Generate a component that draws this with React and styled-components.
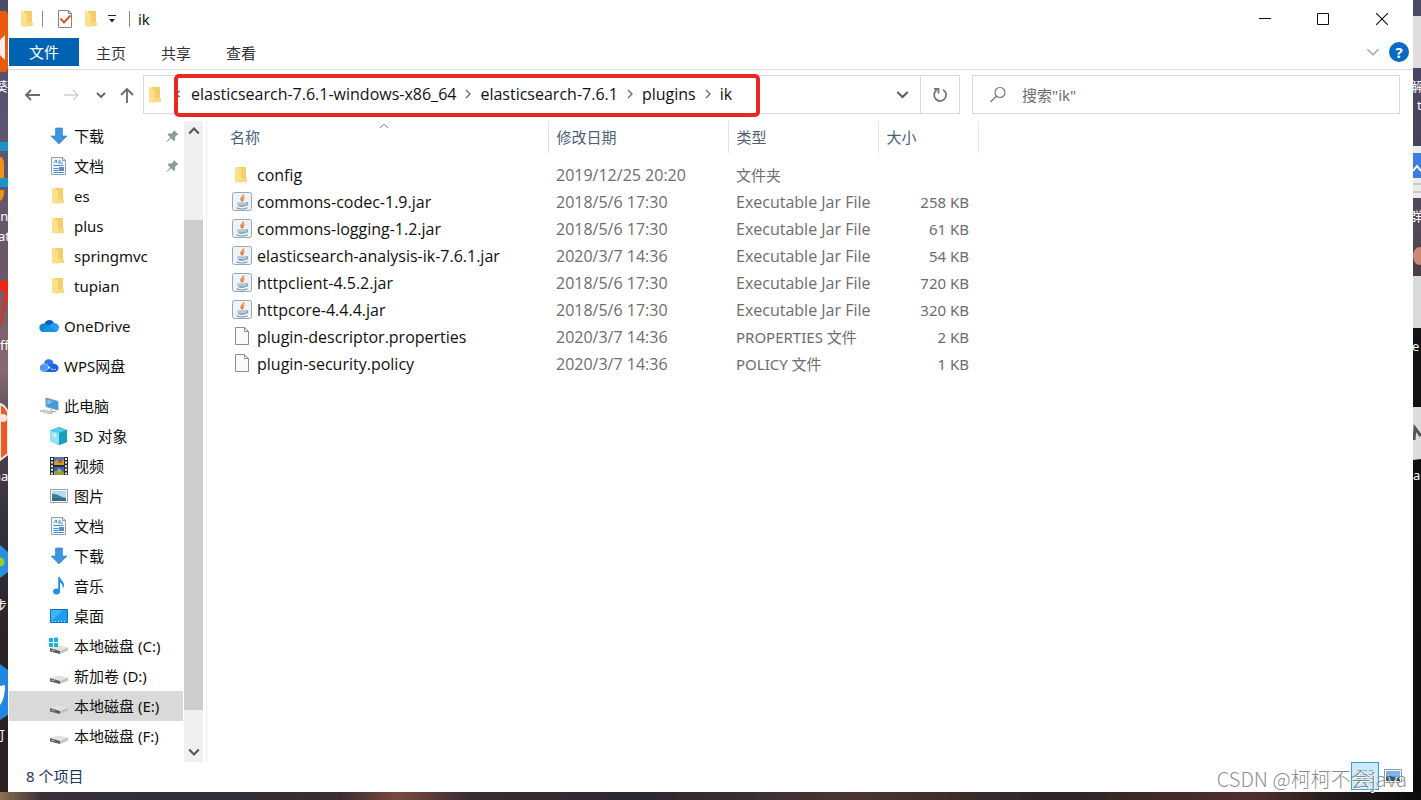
import React from "react";
import styled, { createGlobalStyle } from "styled-components";

const GlobalStyle = createGlobalStyle`
  *, *::before, *::after { box-sizing: border-box; }
  body {
    margin: 0;
    background: #2a2024;
    color: #111;
    font-family: "Noto Sans", "Noto Sans CJK SC", sans-serif;
    font-size: 15px;
    line-height: 20px;
  }
  button, input {
    font: inherit;
    color: inherit;
    border: 0;
    padding: 0;
    margin: 0;
    background: none;
  }
  svg { display: block; flex: none; }
`;

/* ---------- desktop around the window ---------- */

const Desktop = styled.div`
  display: grid;
  grid-template-columns: 8px minmax(0, 1fr) 8px;
  grid-template-rows: minmax(0, 1fr) 8px;
  height: 100vh;
  overflow: hidden;
`;

const Edge = styled.div`
  overflow: hidden;
  background: ${(p) => p.$bg};
`;

const BottomEdge = styled.div`
  grid-column: 1 / -1;
  background: linear-gradient(
    90deg,
    #8e6f52 0, #3a3038 3%, #2f3038 12%, #3b2d33 24%, #7a4a40 28%, #3a2c34 33%,
    #2c2830 45%, #4a3534 60%, #2d2425 75%, #51302f 88%, #241c1e 94%, #0c0b0c 100%
  );
`;

/* ---------- window ---------- */

const Window = styled.main`
  position: relative;
  display: flex;
  flex-direction: column;
  min-height: 0;
  background: #fff;
`;

const TitleBar = styled.header`
  display: flex;
  align-items: center;
  height: 38px;
  padding: 0 1px 0 12px;
`;

const QuickAccess = styled.div`
  display: flex;
  align-items: center;
  gap: 8px;
  flex: 1;
`;

const Rule = styled.span`
  width: 1px;
  height: 16px;
  background: #8a8a8a;
`;

const IconButton = styled.button`
  display: flex;
  align-items: center;
  justify-content: center;
  width: ${(p) => p.$w || 16}px;
  height: ${(p) => p.$h || 20}px;
  color: ${(p) => p.$color || "#5f5f5f"};
`;

const Title = styled.h1`
  margin: 0;
  font-size: 15px;
  font-weight: 400;
  line-height: 20px;
`;

const Ribbon = styled.nav`
  display: flex;
  align-items: center;
  height: 32px;
  padding: 0 4px 3px 1px;
  border-bottom: 1px solid #d9dcdf;
`;

const Tabs = styled.div`
  display: flex;
  flex: 1;
  gap: 35px;
  align-items: center;
`;

const FileTab = styled.button`
  width: 70px;
  height: 28px;
  margin-right: -18px;
  background: #0063b1;
  color: #fff;
`;

const Tab = styled.button`
  height: 28px;
  padding-top: 2px;
  color: #333;
`;

const Help = styled.button`
  width: 20px;
  height: 20px;
  margin-left: 8px;
  border-radius: 50%;
  background: #0a69c4;
  color: #fff;
  font-weight: 700;
  line-height: 20px;
`;

const NavBar = styled.div`
  display: grid;
  grid-template-columns: 120px minmax(0, 13fr) minmax(0, 7fr);
  align-items: center;
  height: 49px;
  padding: 0 13px 0 15px;
`;

const NavButtons = styled.div`
  display: flex;
  align-items: center;
  gap: 18px;
`;

const AddressBox = styled.div`
  display: flex;
  min-width: 0;
  height: 39px;
  border: 1px solid #d9d9d9;
`;

const FolderSlot = styled.div`
  display: flex;
  align-items: center;
  width: 30px;
  padding-left: 4px;
`;

const Crumbs = styled.ol`
  position: relative;
  display: flex;
  align-items: center;
  margin: 0;
  padding: 0 28px 2px 0;
  list-style: none;
  white-space: nowrap;
  font-family: "Open Sans", "Noto Sans CJK SC", sans-serif;
  font-size: 16px;

  &::after {
    content: "";
    position: absolute;
    inset: -2px 0 -4px 0;
    border: 4px solid #e8291f;
    border-radius: 5px;
    pointer-events: none;
  }
`;

const Crumb = styled.li`
  display: flex;
  align-items: center;

  a { color: #111; text-decoration: none; }
`;

const CrumbArrow = styled.span`
  display: flex;
  justify-content: center;
  width: ${(p) => (p.$lead ? 17 : 24)}px;
  padding-right: ${(p) => (p.$lead ? 9 : 0)}px;
`;

const Spacer = styled.div`
  flex: 1;
`;

const AddressEnd = styled.div`
  display: flex;
  align-items: center;
  border-left: ${(p) => (p.$line ? "1px solid #d9d9d9" : "0")};
  padding: 0 ${(p) => (p.$line ? 9 : 8)}px;
`;

const SearchBox = styled.label`
  display: flex;
  align-items: center;
  min-width: 0;
  height: 39px;
  margin-left: 12px;
  padding-left: 16px;
  gap: 15px;
  border: 1px solid #d9d9d9;

  input {
    flex: 1;
    min-width: 0;
    outline: 0;
  }
  input::placeholder { color: #6d6d6d; opacity: 1; }
`;

/* ---------- body ---------- */

const Body = styled.div`
  display: flex;
  flex: 1;
  min-height: 0;
  padding-top: 2px;
`;

const Sidebar = styled.aside`
  display: flex;
  width: 199px;
  border-right: 1px solid #ececec;
`;

const Tree = styled.ul`
  flex: 1;
  margin: 0;
  padding: 0 0 0 1px;
  list-style: none;
  overflow: hidden;
`;

const TreeItem = styled.li`
  height: 30px;
  margin-top: ${(p) => (p.$gap ? 10 : 0)}px;
  background: ${(p) => (p.$selected ? "#d9d9d9" : "transparent")};

  a {
    display: flex;
    align-items: center;
    gap: 5px;
    height: 100%;
    padding: 0 4px 0 ${(p) => (p.$top ? 30 : 40)}px;
    color: #111;
    text-decoration: none;
    white-space: nowrap;
  }
  span { flex: 1; }
`;

const ScrollBar = styled.div`
  display: flex;
  flex-direction: column;
  width: 19px;
  margin: 0 3px 0 1px;
  background: #f0f0f0;
`;

const Track = styled.div`
  display: flex;
  flex-direction: column;
  flex: 1;
  padding: 79px 0 32px;
`;

const Thumb = styled.div`
  flex: 1;
  background: #cdcdcd;
`;

const Files = styled.section`
  flex: 1;
  min-width: 0;
  padding-left: 13px;
  overflow: hidden;
`;

const FileTable = styled.table`
  width: 758px;
  table-layout: fixed;
  border-collapse: collapse;

  th {
    position: relative;
    height: 32px;
    padding: 0 8px;
    border-right: 1px solid #e5e5e5;
    color: #4c607a;
    font-weight: 400;
    text-align: left;
  }
  thead::after {
    content: "";
    display: block;
    height: 8px;
  }
  td {
    height: 27px;
    padding: 0 8px;
    color: #6d6d6d;
    font-family: "Open Sans", "Noto Sans CJK SC", sans-serif;
    font-size: 16px;
    white-space: nowrap;
  }
  td:lang(zh), td:last-child {
    font-family: "Noto Sans", "Noto Sans CJK SC", sans-serif;
    font-size: 15px;
  }
  th:first-child { padding-left: 10px; }
  td:first-child { padding-left: 12px; color: #111; }
  td:last-child { padding-right: 9px; text-align: right; }
`;

const SortMark = styled.span`
  position: absolute;
  inset: 0 0 auto;
  display: flex;
  justify-content: center;
`;

const FileName = styled.div`
  display: flex;
  align-items: center;
  gap: 5px;
`;

const StatusBar = styled.footer`
  display: flex;
  align-items: center;
  height: 30px;
  padding: 0 6px 2px 18px;
  color: #1e395b;
`;

const ViewButton = styled.button`
  display: flex;
  align-items: center;
  justify-content: center;
  width: 28px;
  height: 28px;
  border: 1px solid ${(p) => (p.$active ? "#3aa0d0" : "transparent")};
  background: ${(p) => (p.$active ? "#cde8f8" : "transparent")};
`;

const Watermark = styled.div`
  position: absolute;
  right: 6px;
  bottom: 0;
  color: rgba(120, 120, 120, 0.85);
  font-family: "Noto Sans CJK SC", sans-serif;
  font-size: 20px;
  font-weight: 300;
  line-height: 26px;
  white-space: nowrap;
  text-shadow: 1px 1px 0 #fff;
`;

/* ---------- icons ---------- */

const Svg = ({ w = 20, h = 20, vb, children }) => (
  <svg width={w} height={h} viewBox={vb || `0 0 ${w} ${h}`} fill="none" aria-hidden="true">
    {children}
  </svg>
);

const FolderShape = () => (
  <>
    <path d="M1 1h6v15H1z" fill="#ffe9a6" />
    <path d="M4 1h8v14l-1 1H4z" fill="#f3cf6b" />
    <path d="M1 1l6 3v13l-6-1z" fill="#fde08a" />
    <path d="M7 12h6v4H7z" fill="#f8d97d" />
  </>
);

const FolderSmall = () => <Svg w={14} h={18}><FolderShape /></Svg>;
const Folder = () => <Svg w={20} h={18} vb="-2 0 20 18"><FolderShape /></Svg>;

const CheckDoc = () => (
  <Svg w={16} h={20}>
    <path d="M1.500 1.500h10l3 3v14h-13z" fill="#fbfbfb" stroke="#858585" />
    <path d="M11.500 1.500v3h3" stroke="#858585" />
    <path d="M3.500 9.500l3.500 4 6.500-7" stroke="#e2562a" strokeWidth="2" />
  </Svg>
);

const Chevron = ({ dir = "down", size = 10, color = "currentColor", width = 1.5 }) => {
  const d = {
    down: "M1 3l4 4 4-4",
    up: "M1 7l4-4 4 4",
    right: "M3 1l4 4-4 4",
    left: "M7 1L3 5l4 4",
  }[dir];
  return <Svg w={size} h={size} vb="0 0 10 10"><path d={d} stroke={color} strokeWidth={width} /></Svg>;
};

const Arrow = ({ dir, color }) => {
  const d = {
    left: "M16 9H2M7 4L2 9l5 5",
    right: "M2 9h14M11 4l5 5-5 5",
    up: "M9 17V3M3 9l6-6 6 6",
  }[dir];
  return <Svg w={18} h={18}><path d={d} stroke={color} strokeWidth={dir === "right" ? 1.4 : 1.8} /></Svg>;
};

const Download = () => (
  <Svg><path d="M6.500 2h7v8h4.500l-8 8-8-8h4.500z" fill="#3b93e2" stroke="#2c7fcd" strokeWidth=".6" /></Svg>
);

const Doc = () => (
  <Svg>
    <path d="M2.500 1.500h11l3 3v14h-14z" fill="#f2f5f7" stroke="#9aa0a5" />
    <path d="M13.500 1.500v3h3" stroke="#8b959d" />
    <path d="M5 7l2-3 1 3M9 5h3M9 7h5M4.500 9.500h10M4.500 12.500h5M4.500 14.500h5M4.500 16.500h10" stroke="#3c8fd0" />
    <path d="M10 11h5v4h-5z" fill="#5b8fba" />
  </Svg>
);

const Pin = () => (
  <Svg w={13} h={14}>
    <path d="M8 1l4.500 4.500-1.500.5-2 2 .2 3L7.800 12 5 9.200 1 13l-.5-.500L4.200 8.300 1.500 5.600l1-1.200 3 .2 2-2z" fill="#8d9aa0" />
  </Svg>
);

const OneDrive = () => (
  <Svg>
    <path d="M5.500 8a5 5 0 0 1 9.500-1l-3 6z" fill="#0a62b8" />
    <path d="M4.500 16a4.200 4.200 0 0 1 0-8.400c2-.4 4 .4 5 1.400l6 7z" fill="#1182d8" />
    <path d="M8 11l6-4c3.600-.4 6 2 6 4.500S18 16 16 16H4z" fill="#2a9ff0" />
    <path d="M2 15l8-5 8 5c-1 1-2 1-3 1H5c-1 0-2 0-3-1z" fill="#1492e6" />
  </Svg>
);

const Wps = () => (
  <Svg>
    <path d="M5 8a5 5 0 0 1 9.500-2l-4 5z" fill="#2b78ea" />
    <circle cx="5" cy="12" r="4.200" fill="#4a98f7" />
    <path d="M9 9.500c3-3.500 10-2.500 10.500 2.300.2 2.600-2 4.200-4 4.200H5l6-4z" fill="#1e63dd" />
    <path d="M5.500 8c3 0 4 2 6.500 4.500 1.500 1.500 3 1.500 5 .5" stroke="#cfe2ff" strokeWidth=".8" />
    <path d="M3 15.500c4 0 5.500-2 8-4.500" stroke="#b8d8ff" strokeWidth=".8" />
  </Svg>
);

const Computer = () => (
  <Svg>
    <path d="M7 2l12 3.500V14L7 10.500z" fill="#3d9ce0" stroke="#8298a8" />
    <path d="M8 3.500l6 2L8.500 9z" fill="#7cc4f2" />
    <path d="M12 12.500v2.500l5 1" stroke="#9da7af" />
    <path d="M1 15l4-1 9 2.500-3 1.500z" fill="#cfd4d8" stroke="#9da4aa" strokeWidth=".6" />
  </Svg>
);

const Cube = () => (
  <Svg>
    <path d="M1 4.500L10 1l8 3v12l-8 3-9-4z" fill="#21a7c5" />
    <path d="M1 4.500L10 1l8 3-8 3z" fill="#4ccde4" />
    <path d="M1 4.500L10 7v12l-9-4z" fill="#93e2ef" />
    <path d="M10 7l8-3v12l-8 3z" fill="#16a0be" />
    <path d="M3 7l4 1v4z" fill="#d5f6fa" />
  </Svg>
);

const Film = () => (
  <Svg>
    <path d="M1 1h18v18H1z" fill="#2b2b2b" />
    <path d="M5 1h10v8H5z" fill="#4774c9" />
    <path d="M5 6l4-3 4 2 2-2v6H5z" fill="#b7a635" />
    <circle cx="11" cy="5" r="2" fill="#d2423c" />
    <path d="M5 11h10v8H5z" fill="#3a62c0" />
    <path d="M5 16l5-3 5 3v3H5z" fill="#8ca03c" />
    <path d="M9 12l3 2-2 3z" fill="#e4b04b" />
    <path d="M3 2v17M17 2v17" stroke="#eee" strokeWidth="2" strokeDasharray="2 1.600" />
  </Svg>
);

const Photo = () => (
  <Svg>
    <path d="M1.500 3.500h17v13h-17z" fill="#fff" stroke="#9aa2a8" />
    <path d="M3 5h14v10H3z" fill="#b5dbf2" />
    <path d="M3 8c4-1 8 3 14 4v3H3z" fill="#3f7f95" />
    <path d="M3 12.500c5-1 9 0 14 .5v2H3z" fill="#356b88" />
  </Svg>
);

const Music = () => (
  <Svg>
    <ellipse cx="7.500" cy="15.500" rx="3.500" ry="3" fill="#1c93ea" />
    <path d="M9.200 15.500V1h1.800c.5 3.500 4.500 4.500 4 8.500-.2 1.400-.8 2.200-1.500 3 .8-3-.5-5-2.500-6v9z" fill="#1c93ea" />
  </Svg>
);

const DesktopIcon = () => (
  <Svg>
    <path d="M1.500 3.500h17v13h-17z" fill="#1e9bf5" stroke="#0c70c4" />
    <path d="M2 4h12L4 14H2z" fill="#42b1fb" />
    <path d="M3 15.500h14" stroke="#d6efff" strokeDasharray="1 2" />
  </Svg>
);

const Disk = ({ system }) => (
  <Svg>
    <path d="M1 12l8-2.500 10 2-8 3.500z" fill="#e2e2e2" />
    <path d="M1 12l10 3v3L1 15.500z" fill="#5c5c5c" />
    <path d="M11 15l8-3.500v3L11 18z" fill="#c2c2c2" />
    <path d="M2.500 14l3 1" stroke="#a5df9a" />
    {system && <path d="M0 2h4v4H0zM5 1.500h4V6H5zM0 7h4v4H0zM5 7h4v4H5z" fill="#16b5dd" />}
  </Svg>
);

const Jar = () => (
  <Svg>
    <rect x=".5" y=".5" width="19" height="18" rx="2" fill="#f0f3f6" stroke="#9aa8b4" />
    <path d="M11.500 2.500c1 2-3.500 3-2.500 5 .4.800 1.200 1 1 2M12.500 5.500c-1.800 1-2.500 1.500-1.300 3.500" stroke="#e8772e" strokeWidth="1.400" />
    <path d="M5.500 10.500h8.500v2.500l-2 2H7.500l-2-2z" fill="#8fadc8" />
    <path d="M6 12h7.500" stroke="#e6edf3" strokeWidth=".8" />
    <path d="M14 10.500c2.600 0 2 2.500-.5 3" stroke="#6f93b4" strokeWidth="1.200" />
    <path d="M4.500 15.800c3 1.500 8 1.500 11 0" stroke="#6f93b4" strokeWidth="1.200" />
  </Svg>
);

const BlankFile = () => (
  <Svg>
    <path d="M3.500.500h9l4 4v13h-13z" fill="#fafafa" stroke="#8c8c8c" />
    <path d="M12.500.500v4h4" stroke="#8c8c8c" />
  </Svg>
);

/* ---------- data ---------- */

const tree = [
  { name: "下载", icon: Download, pinned: true },
  { name: "文档", icon: Doc, pinned: true },
  { name: "es", icon: Folder },
  { name: "plus", icon: Folder },
  { name: "springmvc", icon: Folder },
  { name: "tupian", icon: Folder },
  { name: "OneDrive", icon: OneDrive, top: true },
  { name: "WPS网盘", icon: Wps, top: true },
  { name: "此电脑", icon: Computer, top: true },
  { name: "3D 对象", icon: Cube },
  { name: "视频", icon: Film },
  { name: "图片", icon: Photo },
  { name: "文档", icon: Doc },
  { name: "下载", icon: Download },
  { name: "音乐", icon: Music },
  { name: "桌面", icon: DesktopIcon },
  { name: "本地磁盘 (C:)", icon: () => <Disk system /> },
  { name: "新加卷 (D:)", icon: Disk },
  { name: "本地磁盘 (E:)", icon: Disk, selected: true },
  { name: "本地磁盘 (F:)", icon: Disk },
];

const crumbs = ["elasticsearch-7.6.1-windows-x86_64", "elasticsearch-7.6.1", "plugins", "ik"];

const JAR = "Executable Jar File";
const files = [
  { icon: Folder, name: "config", date: "2019/12/25 20:20", type: "文件夹", size: "" },
  { icon: Jar, name: "commons-codec-1.9.jar", date: "2018/5/6 17:30", type: JAR, size: "258 KB" },
  { icon: Jar, name: "commons-logging-1.2.jar", date: "2018/5/6 17:30", type: JAR, size: "61 KB" },
  { icon: Jar, name: "elasticsearch-analysis-ik-7.6.1.jar", date: "2020/3/7 14:36", type: JAR, size: "54 KB" },
  { icon: Jar, name: "httpclient-4.5.2.jar", date: "2018/5/6 17:30", type: JAR, size: "720 KB" },
  { icon: Jar, name: "httpcore-4.4.4.jar", date: "2018/5/6 17:30", type: JAR, size: "320 KB" },
  { icon: BlankFile, name: "plugin-descriptor.properties", date: "2020/3/7 14:36", type: "PROPERTIES 文件", size: "2 KB" },
  { icon: BlankFile, name: "plugin-security.policy", date: "2020/3/7 14:36", type: "POLICY 文件", size: "1 KB" },
];

/* Slivers of the desktop shortcuts on each side of the window. */
const LeftShortcuts = () => (
  <svg width="8" height="792" viewBox="0 0 8 792" fontSize="13" fill="#fff" aria-hidden="true">
    <path d="M0 11h6l2 3v55l-2 3H0z" fill="#ea5a0c" />
    <path d="M0 40l5-5v25l-5-5z" fill="#f5f0ec" />
    <text x="-5" y="91">葵</text>
    <path d="M0 142h8v9H0zM0 178h8v9H0z" fill="#1a93c8" />
    <path d="M0 157c3 0 4 3 4 8v13H0zM0 190h4c0 7-1 9-4 11z" fill="#ee9412" />
    <text x="-7" y="221">an</text>
    <text x="-2" y="241">at</text>
    <path d="M0 281l8-1v15l-7 30H0l5-34H0z" fill="#ef2613" />
    <text x="0" y="350">ff</text>
    <path d="M0 404c4 1 6 4 8 8v42l-8 6z" fill="#ee5a24" stroke="#f6e9e4" strokeWidth="2" />
    <circle cx="3" cy="418" r="4" fill="#f3e6df" />
    <text x="-7" y="481">na</text>
    <path d="M0 545l8 7v20l-8 6z" fill="#2a8fe0" />
    <circle cx="0" cy="562" r="4.500" fill="#95cf20" />
    <text x="-6" y="610">步</text>
    <path d="M0 664l8 6v45l-8 5z" fill="#2287e0" />
    <path d="M0 686l5-1c0 10-2 16-5 20z" fill="#fff" />
    <text x="-8" y="740">可</text>
  </svg>
);

const RightShortcuts = () => (
  <svg width="8" height="792" viewBox="0 0 8 792" fontSize="13" fill="#fff" aria-hidden="true">
    <path d="M0 16h8v52H0z" fill="#dedede" />
    <text x="-3" y="91">解</text>
    <text x="4" y="110">t</text>
    <path d="M0 146h8v52H0z" fill="#ececec" />
    <path d="M0 153h8v25H0z" fill="#3f7ddb" />
    <path d="M0 171l4-5 4 5" stroke="#fff" strokeWidth="2" fill="none" />
    <path d="M0 184h8M0 192h8" stroke="#a5a5a5" />
    <text x="-4" y="221">群</text>
    <ellipse cx="6" cy="256" rx="6" ry="9" fill="#c98a73" />
    <path d="M0 276h8v52H0z" fill="#dadada" />
    <text x="-1" y="351">e</text>
    <path d="M0 407h8v52l-8 1z" fill="#dcdcdc" />
    <path d="M1 440l1-12 6 8" stroke="#555" strokeWidth="3" fill="none" />
    <text x="0" y="480">a</text>
  </svg>
);

/* ---------- page ---------- */

export default function App() {
  return (
    <>
      <GlobalStyle />
      <Desktop>
        <Edge $bg="linear-gradient(#4d4c66 0, #5a5570 120px, #6b5768 270px, #87696f 370px, #4c4052 440px, #35303c 520px, #2b2326 640px, #2c2124 100%)">
          <LeftShortcuts />
        </Edge>
        <Window>
          <TitleBar>
            <QuickAccess>
              <FolderSmall />
              <Rule />
              <IconButton $w={28} aria-label="属性"><CheckDoc /></IconButton>
              <IconButton $w={8} aria-label="新建文件夹"><FolderSmall /></IconButton>
              <IconButton $w={18} aria-label="自定义快速访问工具栏">
                <Svg w={8} h={8}><path d="M0 .5h8" stroke="#222" /><path d="M1 4h6L4 7.500z" fill="#222" /></Svg>
              </IconButton>
              <Rule />
              <Title>ik</Title>
            </QuickAccess>
            <IconButton $w={58} $h={38} $color="#111" aria-label="最小化"><Svg w={12} h={12}><path d="M0 5.500h12" stroke="currentColor" /></Svg></IconButton>
            <IconButton $w={58} $h={38} $color="#111" aria-label="最大化"><Svg w={12} h={12}><path d="M.5.5h11v11H.5z" stroke="currentColor" /></Svg></IconButton>
            <IconButton $w={60} $h={38} $color="#111" aria-label="关闭"><Svg w={12} h={12}><path d="M0 0l12 12M12 0L0 12" stroke="currentColor" strokeWidth="1.100" /></Svg></IconButton>
          </TitleBar>

          <Ribbon>
            <Tabs>
              <FileTab>文件</FileTab>
              <Tab>主页</Tab>
              <Tab>共享</Tab>
              <Tab>查看</Tab>
            </Tabs>
            <IconButton $color="#a5a5a5" aria-label="展开功能区"><Chevron size={14} width={1} /></IconButton>
            <Help aria-label="帮助">?</Help>
          </Ribbon>

          <NavBar>
            <NavButtons>
              <IconButton $w={20} aria-label="后退"><Arrow dir="left" color="#6a6a6a" /></IconButton>
              <IconButton $w={20} aria-label="前进"><Arrow dir="right" color="#cfcfcf" /></IconButton>
              <IconButton $w={4} aria-label="最近浏览的位置"><Chevron size={10} width={1.8} /></IconButton>
              <IconButton $w={12} aria-label="上移"><Arrow dir="up" color="#6a6a6a" /></IconButton>
            </NavButtons>
            <AddressBox>
              <FolderSlot><FolderSmall /></FolderSlot>
              <Crumbs>
                <CrumbArrow $lead><Chevron dir="left" size={8} color="#555" /></CrumbArrow>
                {crumbs.map((c, i) => (
                  <Crumb key={c}>
                    {i > 0 && <CrumbArrow><Chevron dir="right" size={10} color="#6a6a6a" width={1.300} /></CrumbArrow>}
                    <a href="#">{c}</a>
                  </Crumb>
                ))}
              </Crumbs>
              <Spacer />
              <AddressEnd>
                <IconButton $w={20} aria-label="历史记录"><Chevron size={13} width={1.600} /></IconButton>
              </AddressEnd>
              <AddressEnd $line>
                <IconButton $w={20} aria-label="刷新">
                  <Svg w={16} h={16}>
                    <path d="M11 2.700A6 6 0 1 1 4.500 3.200" stroke="#777" strokeWidth="1.800" />
                    <path d="M2 2h4.500v4.500" stroke="#777" strokeWidth="1.800" />
                  </Svg>
                </IconButton>
              </AddressEnd>
            </AddressBox>
            <SearchBox>
              <Svg w={18} h={18}>
                <circle cx="11" cy="6.500" r="5" stroke="#777" strokeWidth="1.200" />
                <path d="M7.500 10L1.500 16" stroke="#777" strokeWidth="1.200" />
              </Svg>
              <input type="text" placeholder={'搜索"ik"'} aria-label="搜索" />
            </SearchBox>
          </NavBar>

          <Body>
            <Sidebar>
              <Tree>
                {tree.map(({ name, icon: Icon, pinned, top, selected }, i) => (
                  <TreeItem key={i} $top={top} $gap={top} $selected={selected}>
                    <a href="#">
                      <Icon />
                      <span>{name}</span>
                      {pinned && <Pin />}
                    </a>
                  </TreeItem>
                ))}
              </Tree>
              <ScrollBar>
                <IconButton $w={19} aria-label="向上滚动"><Chevron dir="up" size={12} width={1.800} color="#555" /></IconButton>
                <Track><Thumb /></Track>
                <IconButton $w={19} aria-label="向下滚动"><Chevron size={12} width={1.800} color="#555" /></IconButton>
              </ScrollBar>
            </Sidebar>

            <Files>
              <FileTable>
                <colgroup>
                  <col style={{ width: "328px" }} />
                  <col style={{ width: "180px" }} />
                  <col style={{ width: "150px" }} />
                  <col style={{ width: "100px" }} />
                </colgroup>
                <thead>
                  <tr>
                    <th>名称<SortMark><Chevron dir="up" size={10} width={1} color="#7a8794" /></SortMark></th>
                    <th>修改日期</th>
                    <th>类型</th>
                    <th>大小</th>
                  </tr>
                </thead>
                <tbody>
                  {files.map(({ icon: Icon, name, date, type, size }) => (
                    <tr key={name}>
                      <td><FileName><Icon />{name}</FileName></td>
                      <td>{date}</td>
                      <td lang={type === JAR ? "en" : "zh"}>{type}</td>
                      <td>{size}</td>
                    </tr>
                  ))}
                </tbody>
              </FileTable>
            </Files>
          </Body>

          <StatusBar>
            <span>8 个项目</span>
            <Spacer />
            <ViewButton $active aria-label="详细信息">
              <Svg w={18} h={16}>
                <path d="M1 2.500h4M7 2.500h4M13 2.500h4M1 6.500h4M7 6.500h4M13 6.500h4M1 10.500h4M7 10.500h4M13 10.500h4M1 14.500h4M7 14.500h4M13 14.500h4" stroke="#8aa6b8" />
              </Svg>
            </ViewButton>
            <ViewButton aria-label="大缩略图">
              <Svg w={18} h={14}>
                <path d="M.5.5h17v13H.5z" fill="#fff" stroke="#8c9aa6" />
                <path d="M2 2h14v10H2z" fill="#7fb2ee" />
                <path d="M2 8c5-3 8 2 14 0v4H2z" fill="#32566f" />
              </Svg>
            </ViewButton>
          </StatusBar>
          <Watermark>CSDN @柯柯不会java</Watermark>
        </Window>
        <Edge $bg="linear-gradient(#4d4c66 0, #464458 140px, #54495a 230px, #4a3c42 276px, #131215 330px, #0b0b0c 100%)">
          <RightShortcuts />
        </Edge>
        <BottomEdge />
      </Desktop>
    </>
  );
}
